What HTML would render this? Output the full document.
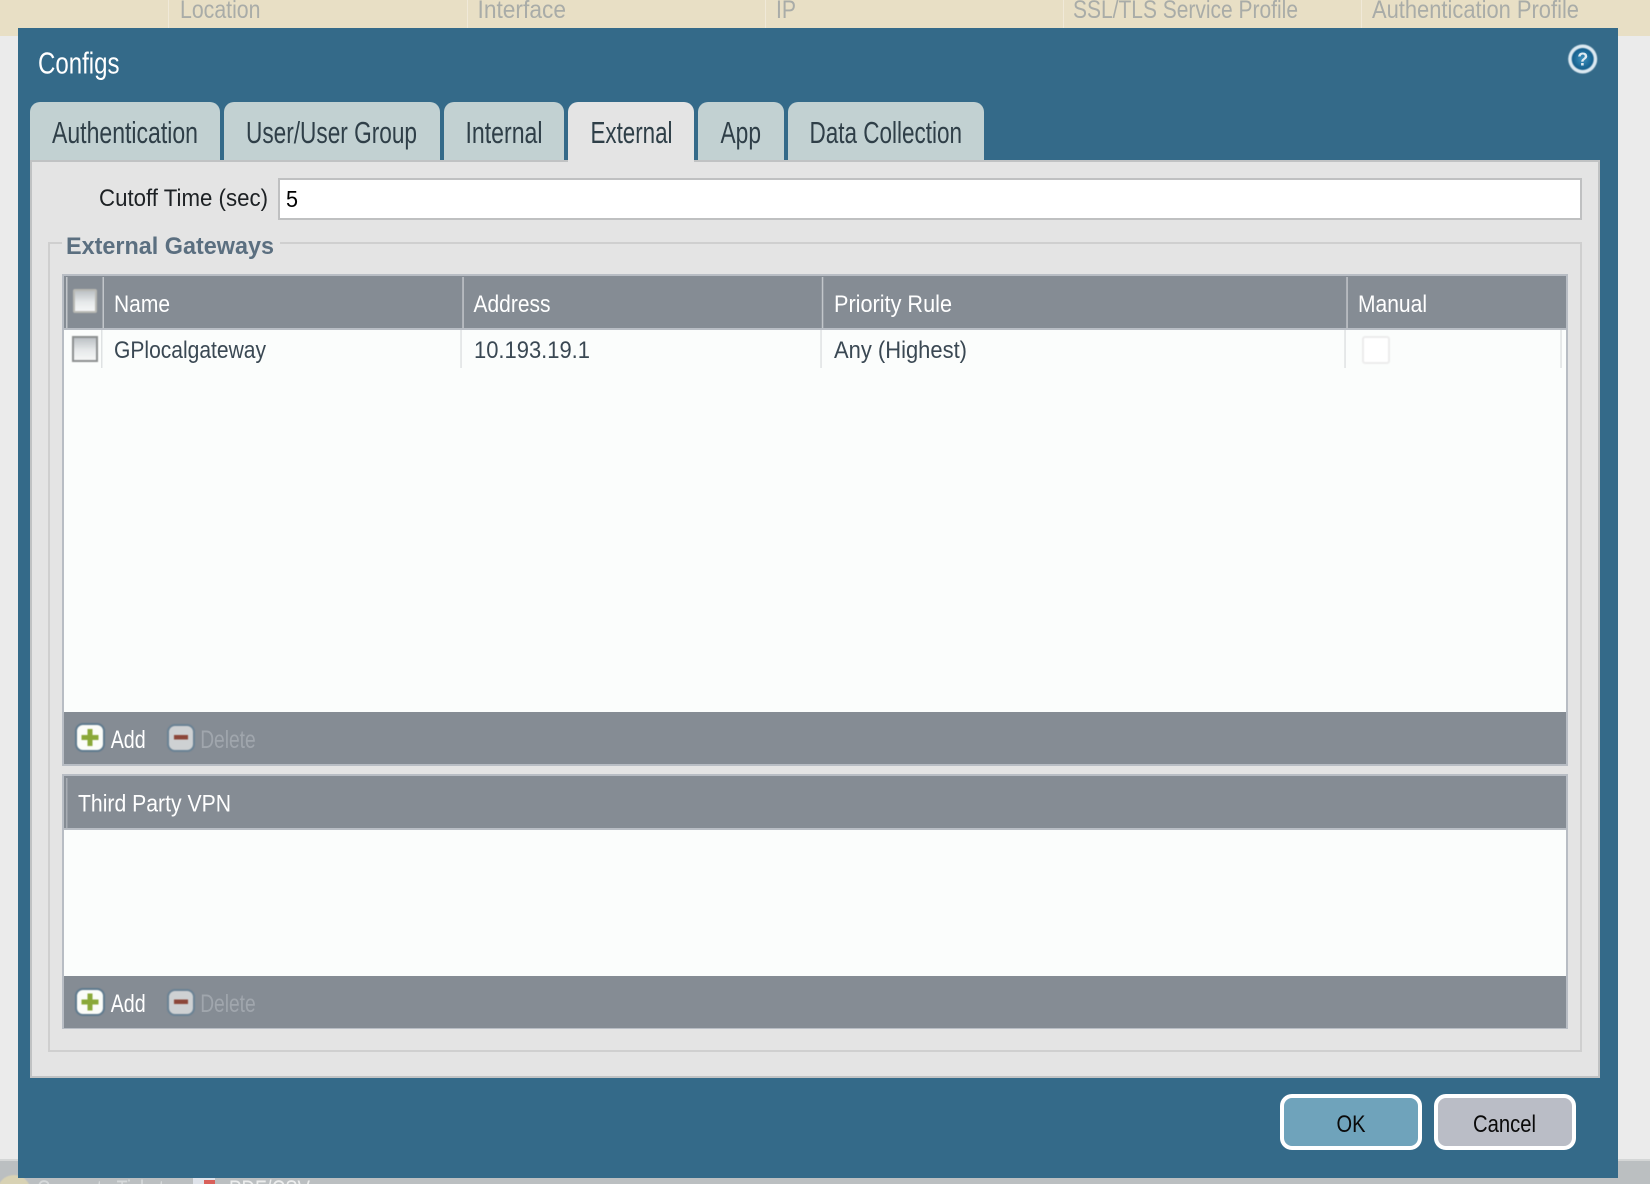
<!DOCTYPE html>
<html><head><meta charset="utf-8"><title>Configs</title>
<style>
html,body{margin:0;padding:0;background:#ebebeb;width:1650px;height:1184px;overflow:hidden}
svg{display:block}
text{font-family:"Liberation Sans",sans-serif}
.bg{font-size:25px;fill:#a9aca8}
.tab{font-size:31px;fill:#2f3f48}
.th{font-size:24px;fill:#fff}
.td{font-size:24px;fill:#3a4853}
.add{font-size:25px;fill:#fff}
.del{font-size:25px;fill:#a0a6ad}
.btn{font-size:24px;fill:#0a0a0a}
.soft{filter:blur(.6px)}
</style></head><body>
<svg width="1650" height="1184" viewBox="0 0 1650 1184" xmlns="http://www.w3.org/2000/svg">
<defs>
<linearGradient id="cb" x1="0" y1="0" x2="0" y2="1"><stop offset="0" stop-color="#b9bec2"/><stop offset=".55" stop-color="#e6e9ea"/><stop offset="1" stop-color="#f7f8f8"/></linearGradient>
<radialGradient id="q" cx=".5" cy=".5" r=".55"><stop offset="0" stop-color="#3f93c0"/><stop offset="1" stop-color="#0c5583"/></radialGradient>
</defs>
<rect width="1650" height="1184" fill="#ebebeb"/>
<rect y="0" width="1650" height="36" fill="#e8dfc5"/>
<rect y="1160" width="1650" height="24" fill="#bbbfc1"/>
<rect y="1159" width="18" height="2" fill="#d4d6d6"/>
<rect x="1618" y="1159" width="32" height="2" fill="#d4d6d6"/>
<g fill="#f0e9d8">
<rect x="168" y="0" width="1" height="28"/><rect x="467" y="0" width="1" height="28"/><rect x="765" y="0" width="1" height="28"/><rect x="1063" y="0" width="1" height="28"/><rect x="1361" y="0" width="1" height="28"/>
</g>
<text class="bg" x="180" y="18" textLength="80.500" lengthAdjust="spacingAndGlyphs">Location</text>
<text class="bg" x="477.500" y="18" textLength="88.500" lengthAdjust="spacingAndGlyphs">Interface</text>
<text class="bg" x="776" y="18" textLength="20" lengthAdjust="spacingAndGlyphs">IP</text>
<text class="bg" x="1073" y="18" textLength="225" lengthAdjust="spacingAndGlyphs">SSL/TLS Service Profile</text>
<text class="bg" x="1372" y="18" textLength="207" lengthAdjust="spacingAndGlyphs">Authentication Profile</text>
<circle class="soft" cx="14" cy="1192" r="17" fill="#d8d2b4"/>
<text x="37" y="1197" font-size="24" fill="#d6d9da" textLength="136" lengthAdjust="spacingAndGlyphs">Generate Tickets</text>
<rect x="193" y="1178" width="22" height="10" fill="#dfe3ea"/><rect x="204" y="1180" width="11" height="6" fill="#d9605a"/>
<text x="229" y="1197" font-size="24" fill="#eceded" textLength="81" lengthAdjust="spacingAndGlyphs">PDF/CSV</text>

<rect x="18" y="28" width="1600" height="1150" fill="#346a89"/>
<text x="38" y="73.500" font-size="31" fill="#fff" textLength="81.500" lengthAdjust="spacingAndGlyphs">Configs</text>
<circle class="soft" cx="1582.700" cy="59" r="14.500" fill="#dce9f1"/>
<circle class="soft" cx="1582.700" cy="59" r="11" fill="url(#q)"/>
<text x="1582.700" y="65.500" font-size="18" font-weight="bold" fill="#dfeaf1" text-anchor="middle">?</text>

<g fill="#c2d1d2">
<path d="M30 160V112a10 10 0 0 1 10-10H210a10 10 0 0 1 10 10V160Z"/>
<path d="M224 160V112a10 10 0 0 1 10-10H430a10 10 0 0 1 10 10V160Z"/>
<path d="M444 160V112a10 10 0 0 1 10-10H554a10 10 0 0 1 10 10V160Z"/>
<path d="M698 160V112a10 10 0 0 1 10-10H774a10 10 0 0 1 10 10V160Z"/>
<path d="M788 160V112a10 10 0 0 1 10-10H974a10 10 0 0 1 10 10V160Z"/>
</g>
<rect x="30" y="160" width="1570" height="918" fill="#e4e4e4" stroke="none"/>
<path d="M31 1077V161H1599V1077H31Z" fill="none" stroke="#c0c2c3" stroke-width="2"/>
<path d="M568 163V112a10 10 0 0 1 10-10H684a10 10 0 0 1 10 10V163Z" fill="#e4e4e4"/>
<text class="tab" x="52" y="143" textLength="146" lengthAdjust="spacingAndGlyphs">Authentication</text>
<text class="tab" x="246" y="143" textLength="171" lengthAdjust="spacingAndGlyphs">User/User Group</text>
<text class="tab" x="465.500" y="143" textLength="77" lengthAdjust="spacingAndGlyphs">Internal</text>
<text class="tab" x="590.500" y="143" textLength="82" lengthAdjust="spacingAndGlyphs">External</text>
<text class="tab" x="720.500" y="143" textLength="40.500" lengthAdjust="spacingAndGlyphs">App</text>
<text class="tab" x="809.500" y="143" textLength="152.500" lengthAdjust="spacingAndGlyphs">Data Collection</text>

<text x="99" y="206" font-size="24" fill="#1d2124" textLength="169" lengthAdjust="spacingAndGlyphs">Cutoff Time (sec)</text>
<rect x="279" y="179" width="1302" height="40" fill="#fff" stroke="#bfc0c1" stroke-width="2"/>
<text x="286" y="207" font-size="23" fill="#000" textLength="12" lengthAdjust="spacingAndGlyphs">5</text>

<path d="M62 243H49V1051H1581V243H280" fill="none" stroke="#cfcfcf" stroke-width="2"/>
<text x="66" y="254" font-size="24" font-weight="bold" fill="#5b6f80" textLength="208" lengthAdjust="spacingAndGlyphs">External Gateways</text>

<!-- table 1 -->
<rect x="62" y="274" width="1506" height="492" fill="#b8bdc4"/>
<rect x="64" y="276" width="1502" height="52" fill="#858c94"/>
<rect x="64" y="330" width="1502" height="382" fill="#fbfdfc"/>
<rect x="64" y="712" width="1502" height="52" fill="#858c94"/>
<g fill="#c2c6ca">
<rect x="66" y="277" width="1.500" height="51"/><rect x="102.500" y="277" width="1.500" height="51"/><rect x="462.300" y="277" width="1.500" height="51"/><rect x="821.800" y="277" width="1.500" height="51"/><rect x="1346.300" y="277" width="1.500" height="51"/>
</g>
<g fill="#dfe2e3">
<rect x="101" y="330" width="1.500" height="38"/><rect x="460.300" y="330" width="1.500" height="38"/><rect x="820.300" y="330" width="1.500" height="38"/><rect x="1344.300" y="330" width="1.500" height="38"/><rect x="1560.300" y="330" width="1.500" height="38"/>
</g>
<rect class="soft" x="74" y="290" width="22" height="22" rx="1" fill="url(#cb)" stroke="#b9b9b4" stroke-width="2"/>
<rect class="soft" x="73" y="337" width="24" height="24" fill="url(#cb)" stroke="#8c8f90" stroke-width="2"/>
<rect class="soft" x="1363" y="337" width="26" height="26" rx="2" fill="#fff" stroke="#ececec" stroke-width="2"/>
<text class="th" x="114" y="312" textLength="56" lengthAdjust="spacingAndGlyphs">Name</text>
<text class="th" x="473.500" y="312" textLength="77" lengthAdjust="spacingAndGlyphs">Address</text>
<text class="th" x="834" y="312" textLength="118" lengthAdjust="spacingAndGlyphs">Priority Rule</text>
<text class="th" x="1358" y="312" textLength="69" lengthAdjust="spacingAndGlyphs">Manual</text>
<text class="td" x="114" y="358" textLength="152" lengthAdjust="spacingAndGlyphs">GPlocalgateway</text>
<text class="td" x="474" y="358" textLength="116" lengthAdjust="spacingAndGlyphs">10.193.19.1</text>
<text class="td" x="834" y="358" textLength="133" lengthAdjust="spacingAndGlyphs">Any (Highest)</text>

<!-- footer 1 -->
<rect class="soft" x="76" y="724" width="28" height="27" rx="7" fill="#fbfcf8" stroke="#5f7a8e" stroke-width="2"/>
<path class="soft" d="M90 729V746M81.500 737.500H98.500" stroke="#8aa838" stroke-width="5" fill="none"/>
<text class="add" x="110.700" y="748" textLength="35" lengthAdjust="spacingAndGlyphs">Add</text>
<rect class="soft" x="168" y="725" width="26" height="26" rx="7" fill="#ced1d3" stroke="#6a8294" stroke-width="2"/>
<rect class="soft" x="174" y="735" width="14" height="4.500" fill="#8c4639"/>
<text class="del" x="200.200" y="748" textLength="55.500" lengthAdjust="spacingAndGlyphs">Delete</text>

<!-- table 2 -->
<rect x="62" y="774" width="1506" height="255" fill="#b8bdc4"/>
<rect x="64" y="776" width="1502" height="52" fill="#858c94"/>
<rect x="64" y="830" width="1502" height="146" fill="#fbfdfc"/>
<rect x="64" y="976" width="1502" height="52" fill="#858c94"/>
<rect x="66" y="778" width="1.500" height="50" fill="#a8adb3"/>
<text class="th" x="78" y="811.700" textLength="153" lengthAdjust="spacingAndGlyphs">Third Party VPN</text>

<!-- footer 2 -->
<rect class="soft" x="76" y="989" width="28" height="26" rx="7" fill="#fbfcf8" stroke="#5f7a8e" stroke-width="2"/>
<path class="soft" d="M90 993.500V1010.500M81.500 1002H98.500" stroke="#8aa838" stroke-width="5" fill="none"/>
<text class="add" x="110.700" y="1012" textLength="35" lengthAdjust="spacingAndGlyphs">Add</text>
<rect class="soft" x="168" y="990" width="26" height="25" rx="7" fill="#ced1d3" stroke="#6a8294" stroke-width="2"/>
<rect class="soft" x="174" y="999.500" width="14" height="4.500" fill="#8c4639"/>
<text class="del" x="200.200" y="1012" textLength="55.500" lengthAdjust="spacingAndGlyphs">Delete</text>

<!-- buttons -->
<rect x="1282" y="1096" width="138" height="52" rx="10" fill="#6fa3bb" stroke="#fff" stroke-width="4"/>
<rect x="1436" y="1096" width="138" height="52" rx="10" fill="#babdc6" stroke="#fff" stroke-width="4"/>
<text class="btn" x="1336.500" y="1132" textLength="29" lengthAdjust="spacingAndGlyphs">OK</text>
<text class="btn" x="1473" y="1132" textLength="63" lengthAdjust="spacingAndGlyphs">Cancel</text>
</svg>
</body></html>
